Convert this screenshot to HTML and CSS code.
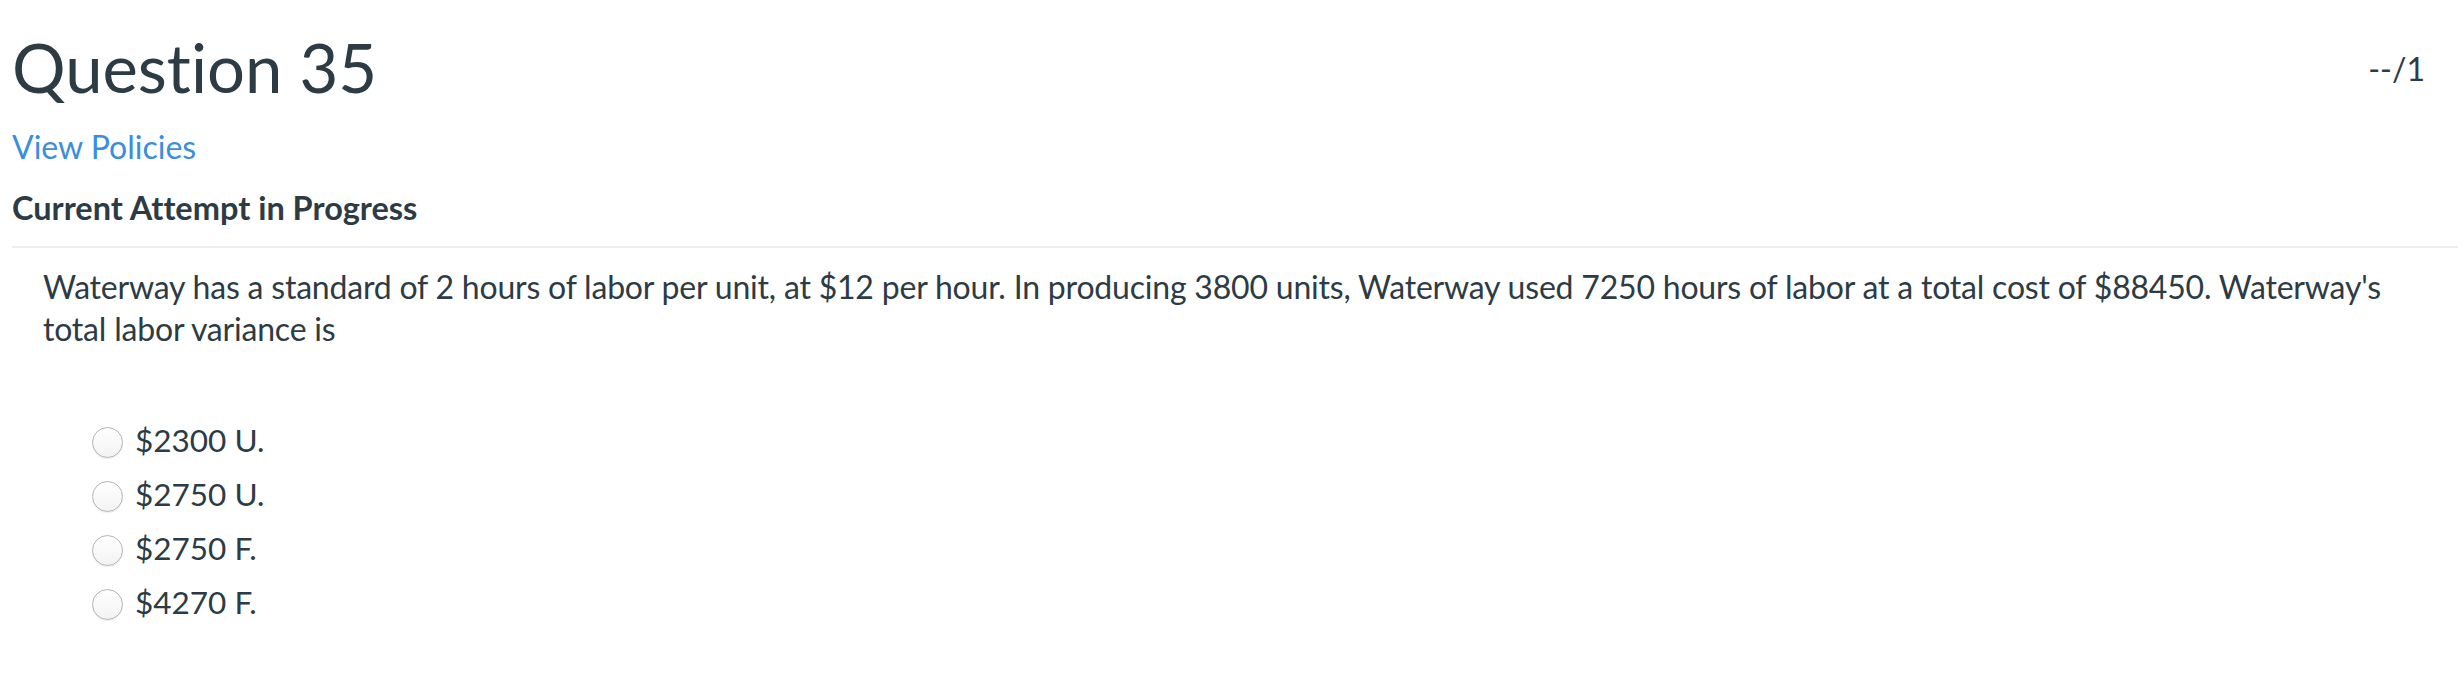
FILE: index.html
```html
<!DOCTYPE html>
<html lang="en">
<head>
<meta charset="utf-8">
<title>Question 35</title>
<link rel="stylesheet" href="styles.css">
</head>
<body>
<div class="page">
  <div class="header">
    <h1 class="title">Question 35</h1>
    <div class="points">--/1</div>
  </div>
  <a class="policies" href="#">View Policies</a>
  <div class="attempt">Current Attempt in Progress</div>
  <div class="question">
    <p class="stem">Waterway has a standard of 2 hours of labor per unit, at $12 per hour. In producing 3800 units, Waterway used 7250 hours of labor at a total cost of $88450. Waterway's total labor variance is</p>
    <ul class="options">
      <li class="option"><span class="radio"></span><span class="label">$2300 U.</span></li>
      <li class="option"><span class="radio"></span><span class="label">$2750 U.</span></li>
      <li class="option"><span class="radio"></span><span class="label">$2750 F.</span></li>
      <li class="option"><span class="radio"></span><span class="label">$4270 F.</span></li>
    </ul>
  </div>
</div>
</body>
</html>
```

FILE: styles.css
```css
html, body {
  margin: 0;
  padding: 0;
  background: #ffffff;
}
body {
  font-family: Lato, "Open Sans", "Liberation Sans", sans-serif;
  color: #2d3b45;
  font-variant-ligatures: none;
}
.page {
  padding: 28px 6px 0 12px;
}
.header {
  display: flex;
  justify-content: space-between;
  align-items: flex-start;
}
.title {
  margin: 0;
  font-size: 67px;
  font-weight: 400;
  line-height: 1.2;
  margin-top: -1px;
}
.points {
  margin-top: 22px;
  margin-right: 33px;
  font-size: 32px;
  line-height: 1.2;
  font-weight: 400;
}
.policies {
  display: block;
  margin-top: 21px;
  font-size: 32px;
  line-height: 1.2;
  color: #3a8edf;
  text-decoration: none;
  width: max-content;
}
.attempt {
  margin-top: 22px;
  font-size: 32.5px;
  font-weight: 700;
  line-height: 38.4px;
  padding-bottom: 19px;
  border-bottom: 2px solid #eeeeee;
}
.question {
  padding: 18px 60px 0 31px;
}
.stem {
  margin: 0;
  font-size: 32px;
  letter-spacing: -0.2px;
  line-height: 42px;
}
.options {
  list-style: none;
  margin: 63px 0 0 0;
  padding: 0 0 0 49px;
}
.option {
  display: flex;
  align-items: center;
  height: 54px;
  font-size: 31.5px;
}
.radio {
  width: 29px;
  height: 29px;
  border-radius: 50%;
  border: 1px solid #b4b4b4;
  background: linear-gradient(#ffffff, #f3f3f3);
  box-shadow: inset 0 1px 1px rgba(255,255,255,0.9), 0 1px 1px rgba(0,0,0,0.08);
  margin-right: 12px;
  margin-top: 5px;
  flex: none;
}
.label {
  line-height: 54px;
}
```
